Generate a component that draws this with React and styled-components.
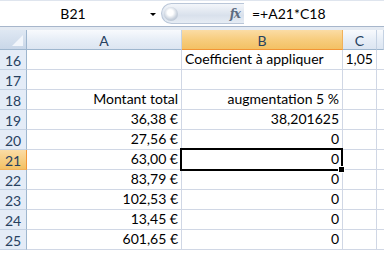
import React from "react";
import styled, { createGlobalStyle, css } from "styled-components";

const Global = createGlobalStyle`
  html, body { margin: 0; padding: 0; background: #ffffff; overflow: hidden; }
  body { font-family: Lato, "Open Sans", sans-serif; }
`;

const Page = styled.div`
  width: 384px;
  height: 255px;
  display: flex;
  flex-direction: column;
  background: #ffffff;
`;

const FormulaBar = styled.div`
  height: 27px;
  box-sizing: border-box;
  display: flex;
  align-items: stretch;
  border-top: 1px solid #dfe5ee;
  border-bottom: 1px solid #a7b6cb;
  background: #ffffff;
`;

const NameBox = styled.div`
  width: 146px;
  display: flex;
  align-items: center;
  justify-content: center;
  font-size: 14px;
  color: #000;
`;

const Drop = styled.div`
  width: 14px;
  display: flex;
  align-items: center;
  justify-content: center;
  &::after {
    content: "";
    border-left: 3px solid transparent;
    border-right: 3px solid transparent;
    border-top: 3px solid #000;
    margin-top: 2px;
  }
`;

const Pill = styled.div`
  margin: 2px 0 2px 1px;
  width: 83px;
  border-radius: 11px 0 0 11px;
  background: linear-gradient(#f3f6fa, #d9e1ec 60%, #e6ecf4);
  border: 1px solid #b9c6d8;
  border-right: none;
  display: flex;
  align-items: center;
  justify-content: space-between;
  padding: 0 4px 0 2px;
  box-sizing: border-box;
`;

const Knob = styled.div`
  width: 14px;
  height: 14px;
  border-radius: 50%;
  background: radial-gradient(circle at 45% 40%, #ffffff 0 25%, #c7d0dc 60%, #aab7c8);
`;

const Fx = styled.span`
  font-family: "DejaVu Serif", serif;
  font-style: italic;
  font-weight: bold;
  font-size: 12px;
  color: #5d6b80;
  letter-spacing: -1px;
`;

const Formula = styled.div`
  flex: 1;
  display: flex;
  align-items: center;
  padding-left: 8px;
  font-size: 14px;
  color: #000;
`;

const Gap = styled.div`
  height: 3px;
  background: #e4eaf2;
`;

const Grid = styled.div`
  display: grid;
  grid-template-columns: 27px 155px 161px 34px 1fr;
  grid-auto-rows: 20px;
`;

const headerBase = css`
  box-sizing: border-box;
  display: flex;
  align-items: center;
  justify-content: center;
  font-size: 14px;
  color: #27415f;
  border-right: 1px solid #9eb6ce;
  border-bottom: 1px solid #9eb6ce;
`;

const Corner = styled.div`
  ${headerBase};
  position: relative;
  background: linear-gradient(#dfe8f3, #c9d7e8);
  &::after {
    content: "";
    position: absolute;
    right: 3px;
    bottom: 3px;
    width: 0;
    height: 0;
    border-left: 11px solid transparent;
    border-bottom: 11px solid #f2f6fb;
  }
`;

const ColHead = styled.div`
  ${headerBase};
  padding-top: 1px;
  background: ${(p) =>
    p.$active
      ? "linear-gradient(#fbdca5, #f7cd7e 50%, #f3c164)"
      : "linear-gradient(#f8fafd, #e7eef7 50%, #dce5f1)"};
  border-right-color: ${(p) => (p.$active ? "#f1b15a" : "#c5d2e3")};
  border-bottom-color: ${(p) => (p.$active ? "#f29536" : "#9eb6ce")};
`;

const RowHead = styled.div`
  ${headerBase};
  padding-top: 1px;
  background: ${(p) =>
    p.$active ? "linear-gradient(#fbdca5, #f3c164)" : "#e4ecf7"};
  border-bottom-color: ${(p) => (p.$active ? "#f1b15a" : "#c5d2e3")};
  border-right-color: ${(p) => (p.$active ? "#f29536" : "#9eb6ce")};
`;

const Cell = styled.div`
  box-sizing: border-box;
  position: relative;
  display: flex;
  align-items: flex-end;
  justify-content: ${(p) => (p.$left ? "flex-start" : "flex-end")};
  padding: 0 3px 1px 3px;
  font-size: 14px;
  line-height: 18px;
  color: #000;
  white-space: nowrap;
  overflow: ${(p) => (p.$spill ? "visible" : "hidden")};
  border-right: ${(p) => (p.$noRight ? "none" : "1px solid #d0d7e5")};
  border-bottom: 1px solid #d0d7e5;
  z-index: ${(p) => (p.$spill ? 2 : 0)};
`;

const Selection = styled.div`
  position: absolute;
  left: -2px;
  top: -2px;
  right: -1px;
  bottom: -2px;
  border: 2px solid #000;
  pointer-events: none;
  &::after {
    content: "";
    position: absolute;
    right: -4px;
    bottom: -4px;
    width: 5px;
    height: 5px;
    background: #000;
    border: 1px solid #fff;
  }
`;

const rows = [
  { n: 16, a: "", b: "Coefficient à appliquer", bLeft: true, c: "1,05" },
  { n: 17, a: "", b: "", c: "" },
  { n: 18, a: "Montant total", b: "augmentation 5 %", c: "" },
  { n: 19, a: "36,38 €", b: "38,201625", c: "" },
  { n: 20, a: "27,56 €", b: "0", c: "" },
  { n: 21, a: "63,00 €", b: "0", c: "", sel: true },
  { n: 22, a: "83,79 €", b: "0", c: "" },
  { n: 23, a: "102,53 €", b: "0", c: "" },
  { n: 24, a: "13,45 €", b: "0", c: "" },
  { n: 25, a: "601,65 €", b: "0", c: "" },
];

export default function App() {
  return (
    <Page>
      <Global />
      <FormulaBar>
        <NameBox>B21</NameBox>
        <Drop />
        <Pill>
          <Knob />
          <Fx>fx</Fx>
        </Pill>
        <Formula>=+A21*C18</Formula>
      </FormulaBar>
      <Gap />
      <Grid>
        <Corner />
        <ColHead>A</ColHead>
        <ColHead $active>B</ColHead>
        <ColHead>C</ColHead>
        <ColHead />
        {rows.map((r) => (
          <React.Fragment key={r.n}>
            <RowHead $active={r.sel}>{r.n}</RowHead>
            <Cell>{r.a}</Cell>
            <Cell $left={r.bLeft} $spill={r.sel}>
              {r.b}
              {r.sel && <Selection />}
            </Cell>
            <Cell>{r.c}</Cell>
            <Cell $noRight />
          </React.Fragment>
        ))}
      </Grid>
    </Page>
  );
}
